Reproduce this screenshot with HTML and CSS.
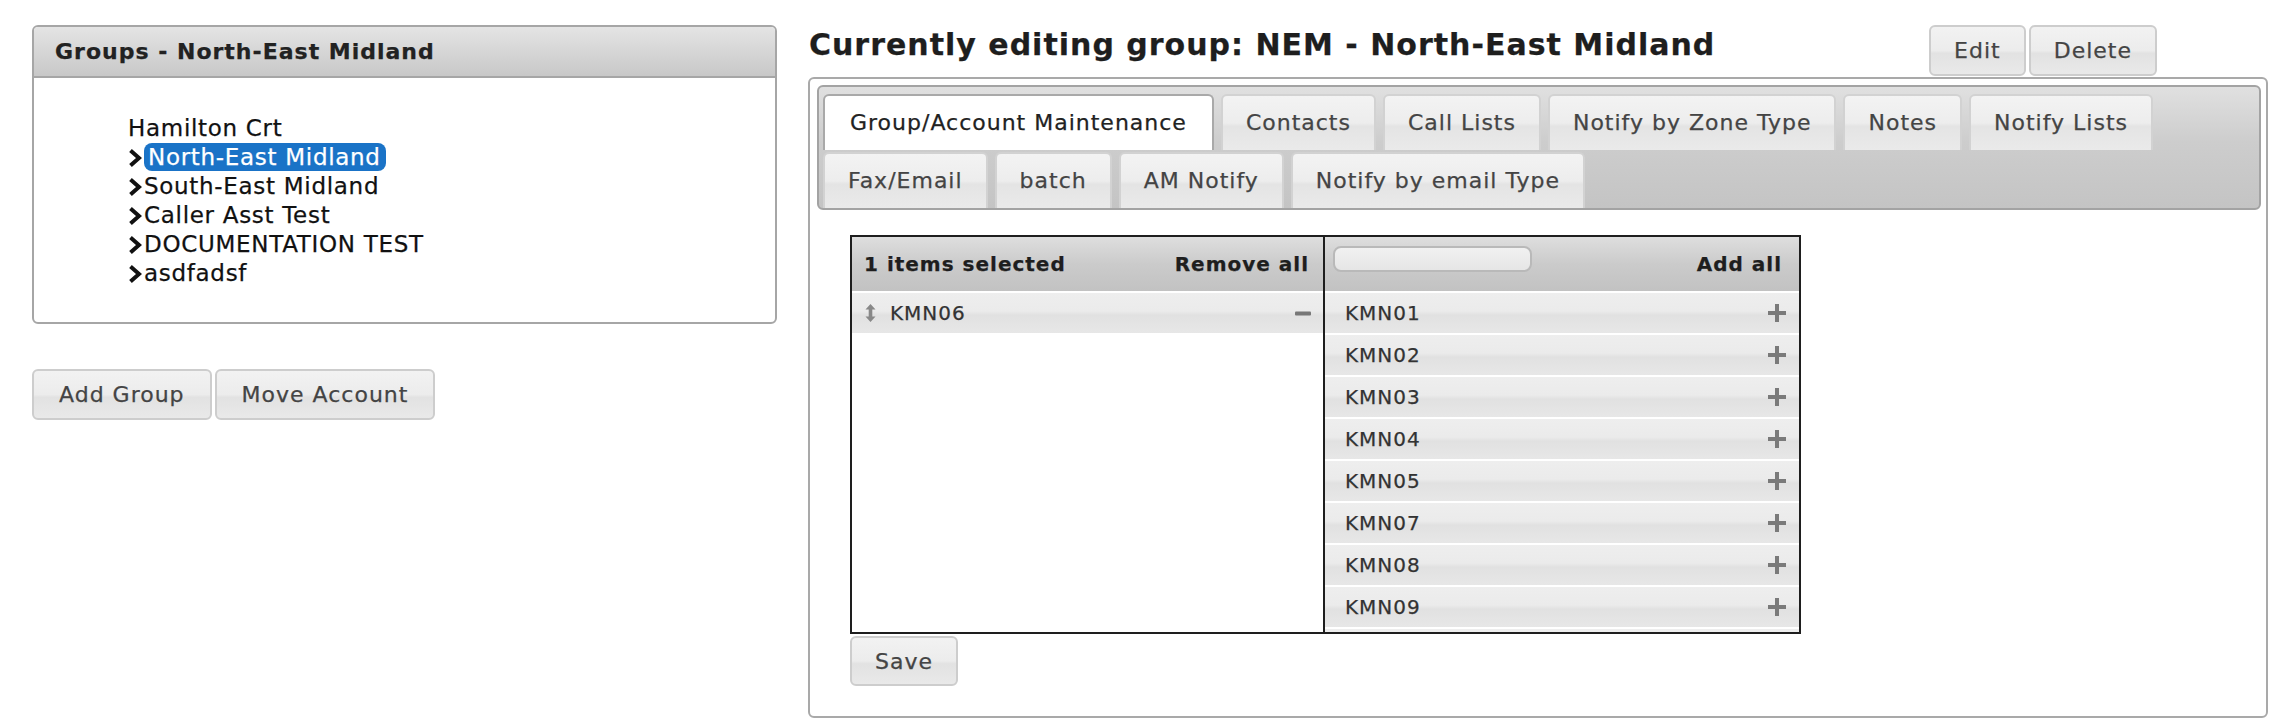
FILE: index.html
```
<!DOCTYPE html>
<html lang="en">
<head>
    <meta charset="UTF-8">
    <title>Groups</title>
    <link rel="stylesheet" href="styles.css">
</head>
<body>

    <div class="page">
        <div class="left-col">
            <div class="group-box">
                <div class="group-head">Groups - North-East Midland</div>
                <ul class="tree">
                    <li>Hamilton Crt
                        <ul>
                            <li><span class="chev"><svg width="14" height="18" viewBox="0 0 14 18"><path d="M2.5 1.5 L11 9 L2.5 16.5" fill="none" stroke="#111" stroke-width="4"/></svg></span><span class="node selected">North-East Midland</span></li>
                            <li><span class="chev"><svg width="14" height="18" viewBox="0 0 14 18"><path d="M2.5 1.5 L11 9 L2.5 16.5" fill="none" stroke="#111" stroke-width="4"/></svg></span><span class="node">South-East Midland</span></li>
                            <li><span class="chev"><svg width="14" height="18" viewBox="0 0 14 18"><path d="M2.5 1.5 L11 9 L2.5 16.5" fill="none" stroke="#111" stroke-width="4"/></svg></span><span class="node">Caller Asst Test</span></li>
                            <li><span class="chev"><svg width="14" height="18" viewBox="0 0 14 18"><path d="M2.5 1.5 L11 9 L2.5 16.5" fill="none" stroke="#111" stroke-width="4"/></svg></span><span class="node">DOCUMENTATION TEST</span></li>
                            <li><span class="chev"><svg width="14" height="18" viewBox="0 0 14 18"><path d="M2.5 1.5 L11 9 L2.5 16.5" fill="none" stroke="#111" stroke-width="4"/></svg></span><span class="node">asdfadsf</span></li>
                        </ul>
                    </li>
                </ul>
            </div>
            <div class="btn-row">
                <button class="btn">Add Group</button>
                <button class="btn">Move Account</button>
            </div>
        </div>

        <div class="right-col">
            <div class="title-row">
                <h1>Currently editing group: NEM - North-East Midland</h1>
                <div class="btn-row">
                    <button class="btn">Edit</button>
                    <button class="btn">Delete</button>
                </div>
            </div>

            <div class="tabs">
                <ul class="tab-nav">
                    <li class="tab active">Group/Account Maintenance</li>
                    <li class="tab">Contacts</li>
                    <li class="tab">Call Lists</li>
                    <li class="tab">Notify by Zone Type</li>
                    <li class="tab">Notes</li>
                    <li class="tab">Notify Lists</li>
                    <li class="tab">Fax/Email</li>
                    <li class="tab">batch</li>
                    <li class="tab">AM Notify</li>
                    <li class="tab">Notify by email Type</li>
                </ul>

                <div class="tab-panel">
                    <div class="multiselect">
                        <div class="ms-col ms-selected">
                            <div class="ms-head">
                                <span>1 items selected</span>
                                <span>Remove all</span>
                            </div>
                            <ul class="ms-list">
                                <li>
                                    <svg class="drag" width="11" height="18" viewBox="0 0 11 18"><path d="M5.5 0 L10.5 5.5 H7.3 V12.5 H10.5 L5.5 18 L0.5 12.5 H3.7 V5.5 H0.5 Z" fill="#888"/></svg>
                                    <span>KMN06</span>
                                    <svg class="act" width="16" height="5" viewBox="0 0 16 5"><rect y="0.5" width="16" height="4" rx="1" fill="#777"/></svg>
                                </li>
                            </ul>
                        </div>
                        <div class="ms-col ms-available">
                            <div class="ms-head">
                                <span class="ms-search"></span>
                                <span>Add all</span>
                            </div>
                            <ul class="ms-list">
                                <li><span>KMN01</span><svg width="18" height="18" viewBox="0 0 18 18"><path d="M7 0h4v7h7v4h-7v7H7v-7H0V7h7z" fill="#7a7a7a"/></svg></li>
                                <li><span>KMN02</span><svg width="18" height="18" viewBox="0 0 18 18"><path d="M7 0h4v7h7v4h-7v7H7v-7H0V7h7z" fill="#7a7a7a"/></svg></li>
                                <li><span>KMN03</span><svg width="18" height="18" viewBox="0 0 18 18"><path d="M7 0h4v7h7v4h-7v7H7v-7H0V7h7z" fill="#7a7a7a"/></svg></li>
                                <li><span>KMN04</span><svg width="18" height="18" viewBox="0 0 18 18"><path d="M7 0h4v7h7v4h-7v7H7v-7H0V7h7z" fill="#7a7a7a"/></svg></li>
                                <li><span>KMN05</span><svg width="18" height="18" viewBox="0 0 18 18"><path d="M7 0h4v7h7v4h-7v7H7v-7H0V7h7z" fill="#7a7a7a"/></svg></li>
                                <li><span>KMN07</span><svg width="18" height="18" viewBox="0 0 18 18"><path d="M7 0h4v7h7v4h-7v7H7v-7H0V7h7z" fill="#7a7a7a"/></svg></li>
                                <li><span>KMN08</span><svg width="18" height="18" viewBox="0 0 18 18"><path d="M7 0h4v7h7v4h-7v7H7v-7H0V7h7z" fill="#7a7a7a"/></svg></li>
                                <li><span>KMN09</span><svg width="18" height="18" viewBox="0 0 18 18"><path d="M7 0h4v7h7v4h-7v7H7v-7H0V7h7z" fill="#7a7a7a"/></svg></li>
                                <li class="more"></li>
                            </ul>
                        </div>
                    </div>
                    <button class="btn save">Save</button>
                </div>
            </div>
        </div>
    </div>

</body>
</html>
```

FILE: styles.css
```
*, *::after, *::before{
    box-sizing: border-box;
}
body{
    margin: 0;
    padding: 25px 0 0 32px;
    font-family: "DejaVu Sans", Verdana, sans-serif;
    letter-spacing: 1px;
    color: #222;
    background-color: #fff;
    -webkit-text-stroke: 0.25px currentColor;
}
.page{
    display: flex;
    gap: 31px;
}

/* left column */
.left-col{
    width: 745px;
}
.group-box{
    height: 299px;
    border: 2px solid #a6a6a6;
    border-radius: 6px;
    overflow: hidden;
}
.group-head{
    height: 51px;
    padding-left: 21px;
    border-bottom: 2px solid #a6a6a6;
    background: linear-gradient(#e4e4e4, #d6d6d6 50%, #c8c8c8);
    font-size: 22px;
    font-weight: bold;
    line-height: 49px;
    color: #222;
}
.tree{
    list-style: none;
    margin: 0;
    padding: 36px 0 0 94px;
    font-size: 23px;
    letter-spacing: 0.7px;
    line-height: 29px;
    color: #111;
}
.tree ul{
    list-style: none;
    margin: 0;
    padding: 0;
}
.chev{
    display: inline-block;
    width: 16px;
}
.chev svg{
    vertical-align: -2px;
}
.node.selected{
    display: inline-block;
    padding: 0 5px 0 4px;
    line-height: 28px;
    border-radius: 8px;
    background-color: #1a73c7;
    color: #fff;
}

/* buttons */
.btn-row{
    display: flex;
    gap: 3px;
}
.left-col .btn-row{
    margin-top: 45px;
}
.btn{
    height: 51px;
    padding: 0 25px;
    border: 2px solid #cdcdcd;
    border-radius: 6px;
    background: linear-gradient(#f2f2f2, #ececec 50%, #e2e2e2 56%, #e9e9e9);
    font-family: inherit;
    font-size: 22px;
    letter-spacing: 1px;
    color: #444;
    cursor: pointer;
}
.title-row .btn{
    padding: 0 23px;
}

/* right column */
.right-col{
    width: 1460px;
}
.title-row{
    display: flex;
    justify-content: space-between;
    align-items: flex-start;
    height: 52px;
    padding-right: 111px;
}
h1{
    margin: 0;
    padding-left: 1px;
    font-size: 30px;
    line-height: 40px;
    font-weight: bold;
    color: #1e1e1e;
}
.tabs{
    border: 2px solid #a9a9a9;
    border-radius: 6px;
    padding: 6px 5px 6px 7px;
}
.tab-nav{
    list-style: none;
    margin: 0;
    padding: 7px 4px 0 4px;
    display: flex;
    flex-wrap: wrap;
    column-gap: 7px;
    row-gap: 2px;
    border: 2px solid #a3a3a3;
    border-radius: 6px;
    background: linear-gradient(#e0e0e0, #cdcdcd 45%, #c4c4c4);
}
.tab{
    height: 56px;
    padding: 0 23px;
    border: 2px solid #d2d2d2;
    border-bottom: 0;
    border-radius: 6px 6px 0 0;
    background: linear-gradient(#f3f3f3, #ededed 50%, #e4e4e4 56%, #eaeaea);
    font-size: 22px;
    line-height: 54px;
    color: #444;
    white-space: nowrap;
    cursor: pointer;
}
.tab.active{
    padding: 0 25px;
    background: #fff;
    border-color: #a9a9a9;
    color: #222;
}
.tab-panel{
    padding: 25px 0 24px 33px;
}

/* dual list */
.multiselect{
    display: flex;
    width: 951px;
    height: 399px;
    border: 2px solid #1e1e1e;
    overflow: hidden;
}
.ms-col{
    display: flex;
    flex-direction: column;
    overflow: hidden;
}
.ms-selected{
    width: 471px;
}
.ms-available{
    flex: 1;
    border-left: 2px solid #1e1e1e;
}
.ms-head{
    flex: none;
    height: 54px;
    padding: 0 14px 0 12px;
    display: flex;
    align-items: center;
    justify-content: space-between;
    background: linear-gradient(#dedede, #cbcbcb 50%, #c2c2c2);
    font-size: 20px;
    font-weight: bold;
    color: #1e1e1e;
}
.ms-available .ms-head{
    padding: 0 17px 0 8px;
}
.ms-search{
    align-self: flex-start;
    margin-top: 9px;
    width: 199px;
    height: 26px;
    border: 2px solid #b9b9b9;
    border-radius: 8px;
    background: linear-gradient(#f1f1f1, #e6e6e6);
}
.ms-list{
    list-style: none;
    margin: 0;
    padding: 0;
}
.ms-list li{
    flex: none;
    height: 40px;
    margin-top: 2px;
    padding: 0 13px 0 20px;
    display: flex;
    align-items: center;
    justify-content: space-between;
    background: linear-gradient(#eeeeee, #ebebeb 45%, #e1e1e1 55%, #e7e7e7);
    font-size: 20px;
    color: #333;
}
.ms-selected .ms-list li{
    padding: 0 12px 0 13px;
    justify-content: flex-start;
}
.ms-selected .drag{
    margin-right: 14px;
}
.ms-selected .act{
    margin-left: auto;
}
.save{
    display: block;
    margin-top: 2px;
    height: 50px;
    padding: 0 23px;
}
```
